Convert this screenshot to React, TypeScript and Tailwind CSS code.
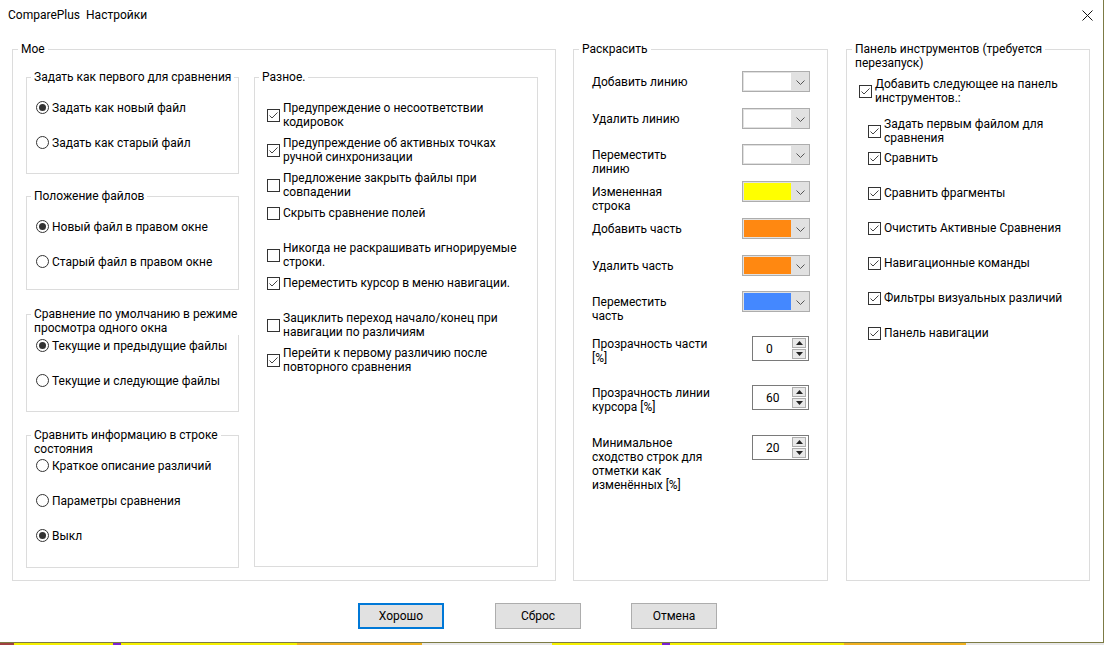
import React from "react";

const font = { fontFamily: 'Roboto, "Noto Sans", sans-serif' };

// group box: border with caption sitting on the top edge
const Group = ({
  title,
  className,
  titleLeft,
  children,
}: {
  title: React.ReactNode;
  className: string;
  titleLeft: string;
  children?: React.ReactNode;
}) => (
  <div className={`relative border border-[#dcdcdc] ${className}`}>
    <div className={`absolute -top-[8px] ${titleLeft} whitespace-nowrap bg-white px-[3px] leading-[14px]`}>
      {title}
    </div>
    {children}
  </div>
);

const Radio = ({ label, checked }: { label: string; checked?: boolean }) => (
  <div className="flex h-[35px] items-center">
    <span className="flex h-[13px] w-[13px] items-center justify-center rounded-full border border-[#333] bg-white">
      {checked && <span className="h-[7px] w-[7px] rounded-full bg-[#333]" />}
    </span>
    <span className="ml-[3px] leading-[14px]">{label}</span>
  </div>
);

const Check = ({ lines, checked }: { lines: string[]; checked?: boolean }) => (
  <div className="flex items-center">
    <span className="flex h-[13px] w-[13px] shrink-0 items-center justify-center border border-[#333] bg-white">
      {checked && (
        <svg width="11" height="11" viewBox="0 0 11 11">
          <path d="M1.5 5.5 L4 8 L9.5 2.5" fill="none" stroke="#444" strokeWidth="1" />
        </svg>
      )}
    </span>
    <span className="ml-[3px] whitespace-nowrap leading-[14px]">
      {lines.map((l, i) => (
        <div key={i}>{l}</div>
      ))}
    </span>
  </div>
);

const Chevron = () => (
  <svg width="9" height="5" viewBox="0 0 9 5">
    <path d="M0.5 0.5 L4.5 4.5 L8.5 0.5" fill="none" stroke="#555" strokeWidth="1" />
  </svg>
);

const ColorCombo = ({ color }: { color: string }) => (
  <div className="flex h-[21px] w-[68px] items-center border border-[#adadad] bg-[#e1e1e1] pl-[1px]">
    <div className={`h-[17px] w-[47px] ${color}`} />
    <div className="flex flex-1 justify-center pt-[1px]">
      <Chevron />
    </div>
  </div>
);

const Spin = ({ value }: { value: string }) => (
  <div className="flex h-[25px] w-[57px] items-center border border-[#7a7a7a] bg-white">
    <span className="flex-1 pl-[13px] leading-[14px]">{value}</span>
    <div className="mr-[2px] flex flex-col gap-[1px]">
      <div className="flex h-[10px] w-[14px] items-center justify-center border border-[#adadad] bg-[#e9e9e9]">
        <svg width="7" height="4" viewBox="0 0 7 4">
          <path d="M0 4 L3.5 0 L7 4 Z" fill="#222" />
        </svg>
      </div>
      <div className="flex h-[10px] w-[14px] items-center justify-center border border-[#adadad] bg-[#e9e9e9]">
        <svg width="7" height="4" viewBox="0 0 7 4">
          <path d="M0 0 L3.5 4 L7 0 Z" fill="#222" />
        </svg>
      </div>
    </div>
  </div>
);

const misc: { lines: string[]; checked: boolean }[] = [
  { lines: ["Предупреждение о несоответствии", "кодировок"], checked: true },
  { lines: ["Предупреждение об активных точках", "ручной синхронизации"], checked: true },
  { lines: ["Предложение закрыть файлы при", "совпадении"], checked: false },
  { lines: ["Скрыть сравнение полей"], checked: false },
  { lines: ["Никогда не раскрашивать игнорируемые", "строки."], checked: false },
  { lines: ["Переместить курсор в меню навигации."], checked: true },
  { lines: ["Зациклить переход начало/конец при", "навигации по различиям"], checked: false },
  { lines: ["Перейти к первому различию после", "повторного сравнения"], checked: true },
];

const colors = [
  { lines: ["Добавить линию"], color: "bg-white", h: "h-[37px]" },
  { lines: ["Удалить линию"], color: "bg-white", h: "h-[36px]" },
  { lines: ["Переместить", "линию"], color: "bg-white", h: "h-[37px]" },
  { lines: ["Измененная", "строка"], color: "bg-[#ffff00]", h: "h-[37px]" },
  { lines: ["Добавить часть"], color: "bg-[#ff8811]", h: "h-[37px]" },
  { lines: ["Удалить часть"], color: "bg-[#ff8811]", h: "h-[36px]" },
  { lines: ["Переместить", "часть"], color: "bg-[#4488ff]", h: "h-[45px]" },
];

const spins = [
  { lines: ["Прозрачность части", "[%]"], value: "0", h: "h-[49px]" },
  { lines: ["Прозрачность линии", "курсора [%]"], value: "60", h: "h-[50px]" },
  { lines: ["Минимальное", "сходство строк для", "отметки как", "изменённых [%]"], value: "20", h: "h-[60px]" },
];

const toolbar = [
  { lines: ["Задать первым файлом для", "сравнения"], h: "h-[34px]" },
  { lines: ["Сравнить"], h: "h-[35px]" },
  { lines: ["Сравнить фрагменты"], h: "h-[35px]" },
  { lines: ["Очистить Активные Сравнения"], h: "h-[35px]" },
  { lines: ["Навигационные команды"], h: "h-[35px]" },
  { lines: ["Фильтры визуальных различий"], h: "h-[35px]" },
  { lines: ["Панель навигации"], h: "h-[35px]" },
];

const Button = ({ label, primary }: { label: string; primary?: boolean }) => (
  <button
    className={`flex h-[26px] w-[86px] items-center justify-center bg-[#e1e1e1] leading-[14px] ${
      primary ? "border-2 border-[#0078d7]" : "border border-[#adadad]"
    }`}
  >
    {label}
  </button>
);

export default function App() {
  return (
    <div className="h-[645px] w-[1104px] overflow-hidden bg-white text-[12px] text-black" style={font}>
      <div className="flex h-[643px] w-[1104px] flex-col border-r border-b border-[#7c7b45]">
        {/* title bar */}
        <div className="flex h-[30px] items-center justify-between pl-[8px] pr-[10px]">
          <div className="leading-[14px]">
            ComparePlus<span className="ml-[6px]">Настройки</span>
          </div>
          <svg width="11" height="11" viewBox="0 0 11 11">
            <path d="M0.5 0.5 L10.5 10.5 M10.5 0.5 L0.5 10.5" stroke="#111" strokeWidth="1" />
          </svg>
        </div>

        <div className="mt-[19px] flex pl-[12px]">
          {/* Мое */}
          <Group title="Мое" titleLeft="left-[5px]" className="flex h-[532px] w-[544px] pl-[13px] pt-[27px]">
            <div className="flex w-[213px] flex-col">
              <Group title="Задать как первого для сравнения" titleLeft="left-[4px]" className="h-[97px] pl-[9px] pt-[12px]">
                <Radio label="Задать как новый файл" checked />
                <Radio label="Задать как старый файл" />
              </Group>
              <Group title="Положение файлов" titleLeft="left-[4px]" className="mt-[22px] h-[94px] pl-[9px] pt-[12px]">
                <Radio label="Новый файл в правом окне" checked />
                <Radio label="Старый файл в правом окне" />
              </Group>
              <Group
                title={
                  <>
                    Сравнение по умолчанию в режиме
                    <br />
                    просмотра одного окна
                  </>
                }
                titleLeft="left-[4px]"
                className="mt-[24px] h-[98px] pl-[9px] pt-[13px]"
              >
                <Radio label="Текущие и предыдущие файлы" checked />
                <Radio label="Текущие и следующие файлы" />
              </Group>
              <Group
                title={
                  <>
                    Сравнить информацию в строке
                    <br />
                    состояния
                  </>
                }
                titleLeft="left-[4px]"
                className="mt-[23px] h-[133px] pl-[9px] pt-[12px]"
              >
                <Radio label="Краткое описание различий" />
                <Radio label="Параметры сравнения" />
                <Radio label="Выкл" checked />
              </Group>
            </div>

            <Group title="Разное." titleLeft="left-[4px]" className="ml-[15px] h-[490px] w-[284px] pl-[12px] pt-[23px]">
              {misc.map((m, i) => (
                <div key={i} className="h-[35px]">
                  <Check lines={m.lines} checked={m.checked} />
                </div>
              ))}
            </Group>
          </Group>

          {/* Раскрасить */}
          <Group title="Раскрасить" titleLeft="left-[5px]" className="ml-[17px] h-[532px] w-[255px] pl-[18px] pt-[21px]">
            {colors.map((c, i) => (
              <div key={i} className={`flex items-start ${c.h}`}>
                <div className="w-[150px] pt-[4px] leading-[14px]">
                  {c.lines.map((l, j) => (
                    <div key={j}>{l}</div>
                  ))}
                </div>
                <ColorCombo color={c.color} />
              </div>
            ))}
            {spins.map((s, i) => (
              <div key={i} className={`flex items-start ${s.h}`}>
                <div className="w-[160px] pt-[1px] leading-[14px]">
                  {s.lines.map((l, j) => (
                    <div key={j}>{l}</div>
                  ))}
                </div>
                <Spin value={s.value} />
              </div>
            ))}
          </Group>

          {/* Панель инструментов */}
          <Group
            title={
              <>
                Панель инструментов (требуется
                <br />
                перезапуск)
              </>
            }
            titleLeft="left-[5px]"
            className="ml-[18px] h-[532px] w-[244px] pl-[12px] pt-[27px]"
          >
            <div className="h-[40px]">
              <Check lines={["Добавить следующее на панель", "инструментов.:"]} checked />
            </div>
            <div className="pl-[9px]">
              {toolbar.map((t, i) => (
                <div key={i} className={t.h}>
                  <Check lines={t.lines} checked />
                </div>
              ))}
            </div>
          </Group>
        </div>

        {/* buttons */}
        <div className="mt-[22px] flex pl-[358px]">
          <Button label="Хорошо" primary />
          <div className="ml-[51px]">
            <Button label="Сброс" />
          </div>
          <div className="ml-[50px]">
            <Button label="Отмена" />
          </div>
        </div>
      </div>

      {/* strip of the window underneath */}
      <div className="flex h-[2px] w-[1104px]">
        <div className="w-[14px] bg-[#a04040]" />
        <div className="w-[99px] bg-[#f5f000]" />
        <div className="w-[8px] bg-[#7a20d0]" />
        <div className="w-[176px] bg-[#f5f000]" />
        <div className="w-[125px] bg-[#f0b020]" />
        <div className="w-[130px] bg-[#e8e8e8]" />
        <div className="w-[110px] bg-[#f5f000]" />
        <div className="w-[8px] bg-[#7a20d0]" />
        <div className="w-[174px] bg-[#f5f000]" />
        <div className="w-[122px] bg-[#f0b020]" />
        <div className="flex-1 bg-[#e8e8e8]" />
      </div>
    </div>
  );
}
